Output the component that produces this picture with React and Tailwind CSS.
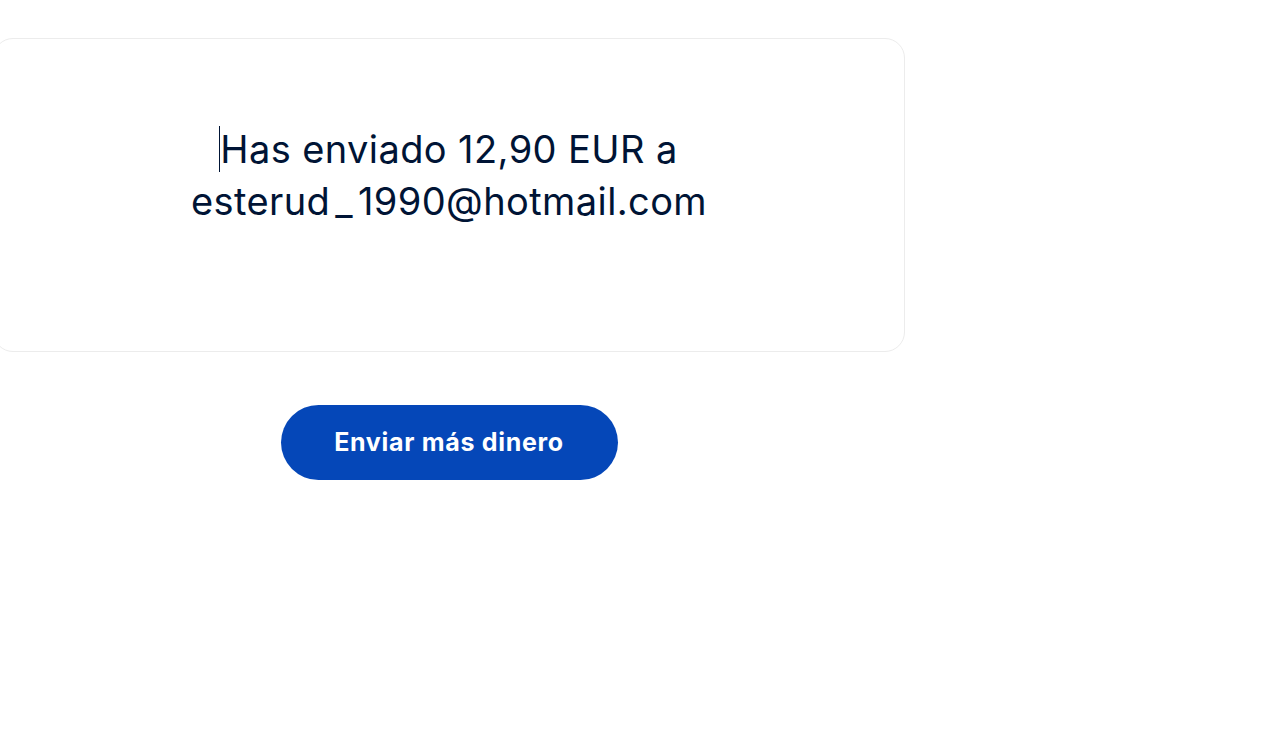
import React from "react";

const App = () => {
  return (
    <div className="min-h-screen w-full bg-white font-['Inter',sans-serif]">
      <div className="flex flex-col items-center pt-[38px] ml-[-7px] w-[912px]">
        {/* confirmation card */}
        <div className="w-full h-[314px] rounded-[20px] border border-[#ececec] bg-white pt-[84px] flex flex-col items-center">
          <p className="text-[38px] leading-[52px] text-[#001435] text-center tracking-[0.4px]">
            <span className="border-l border-[#001435] ml-[-1px]"></span>
            Has enviado 12,90 EUR a
            <br />
            esterud<span className="mx-[5px]">_</span>1990@hotmail.com
          </p>
        </div>

        {/* send again */}
        <button className="mt-[53px] w-[337px] h-[75px] rounded-full bg-[#0547b8] text-white text-[25px] font-bold tracking-[0.7px]">
          Enviar más dinero
        </button>
      </div>
    </div>
  );
};

export default App;
